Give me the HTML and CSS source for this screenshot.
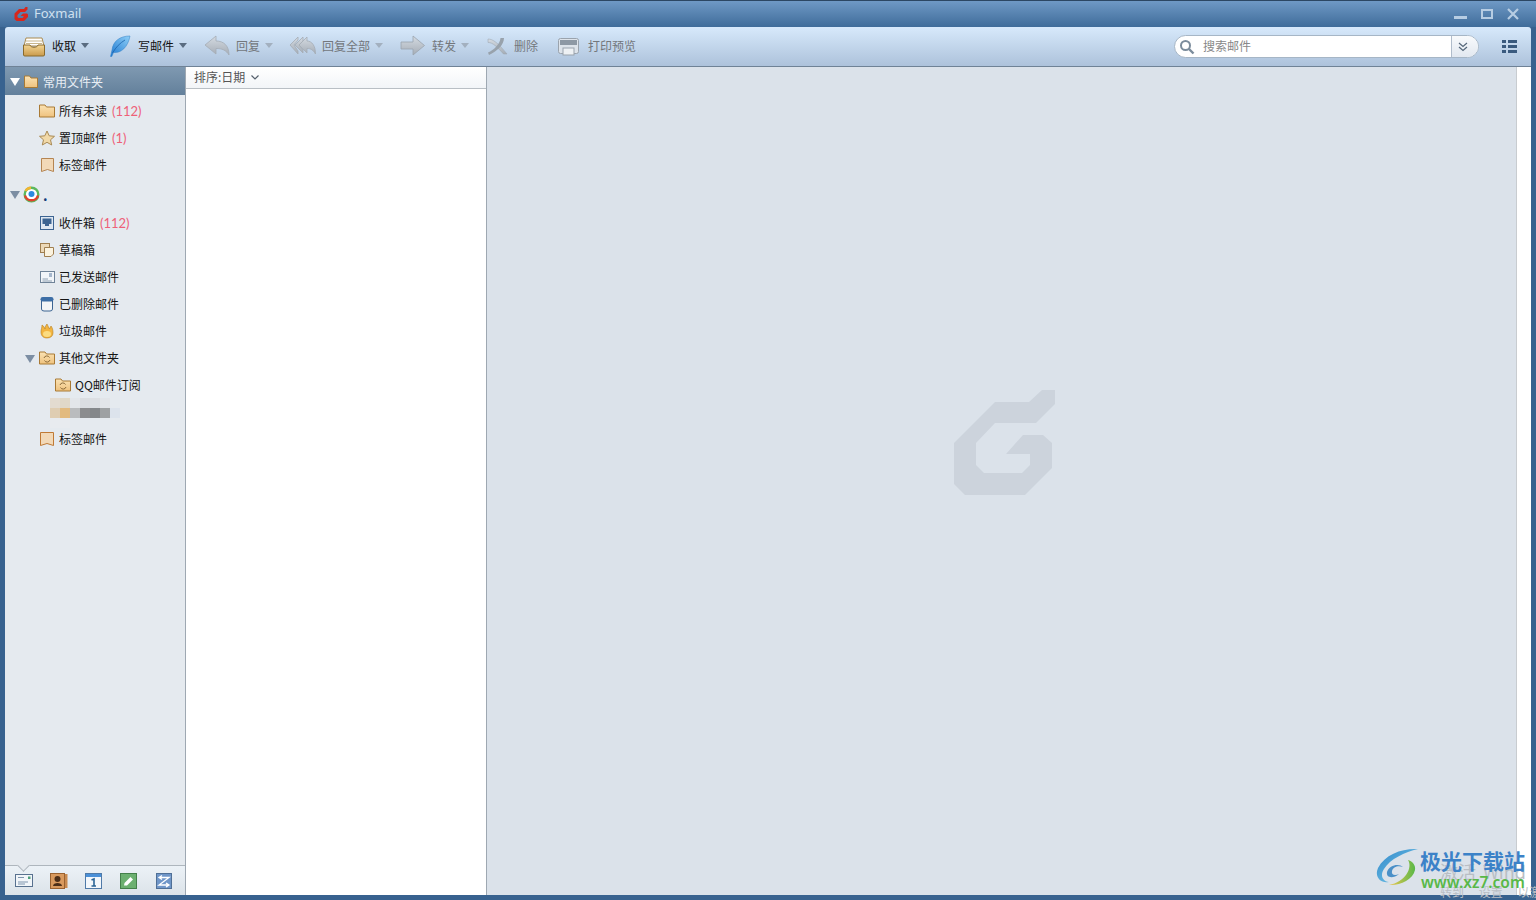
FILE: index.html
```html
<!DOCTYPE html>
<html lang="zh-CN">
<head>
  <meta charset="UTF-8" />
  <title>Foxmail</title>
  <link rel="stylesheet" href="styles.css">
</head>
<body>
  <svg class="defs" aria-hidden="true">
    <defs>
      <linearGradient id="tan" x1="0" y1="0" x2="0" y2="1"><stop offset="0" stop-color="#fbe3b4"/><stop offset="1" stop-color="#efc27e"/></linearGradient>
      <linearGradient id="tray" x1="0" y1="0" x2="0" y2="1"><stop offset="0" stop-color="#f3d593"/><stop offset="1" stop-color="#c99a4c"/></linearGradient>
      <linearGradient id="feather" x1="1" y1="0" x2="0" y2="1"><stop offset="0" stop-color="#8fd0f8"/><stop offset="1" stop-color="#1f78d0"/></linearGradient>
      <linearGradient id="off" x1="0" y1="0" x2="0" y2="1"><stop offset="0" stop-color="#d5dbe2"/><stop offset="1" stop-color="#a5adb6"/></linearGradient>
      <linearGradient id="swirl1" x1="0" y1="0" x2="1" y2="1"><stop offset="0" stop-color="#2f86c8"/><stop offset="1" stop-color="#7fd0ee"/></linearGradient>
      <linearGradient id="swirl2" x1="0" y1="0" x2="1" y2="0"><stop offset="0" stop-color="#f0c850"/><stop offset="1" stop-color="#58b848"/></linearGradient>
    </defs>
  </svg>

  <div class="window">
    <header class="titlebar">
      <svg class="app-logo" width="16" height="16" viewBox="0 0 16 16"><path d="M14.500 1 L14.500 3.500 L12 6 L7.500 6 L4.500 9 L4.500 11 L5.500 12 L9.500 12 L10.500 11 L10.500 10 L7.500 10 L10 7.500 L14 7.500 L15 8.500 L15 11 L11 15 L3.500 15 L1.500 13 L1.500 7.500 L6 3 L11 3 L12.500 1 Z" fill="#d8261c"/></svg>
      <span class="app-name">Foxmail</span>
      <div class="win-controls">
        <svg width="13" height="12" viewBox="0 0 13 12"><rect x="0" y="8" width="13" height="3" fill="#b7cde3"/></svg>
        <svg width="12" height="12" viewBox="0 0 12 12"><rect x="1" y="2" width="10" height="8" fill="none" stroke="#b7cde3" stroke-width="2"/></svg>
        <svg width="12" height="12" viewBox="0 0 12 12"><path d="M1 1 L11 11 M11 1 L1 11" stroke="#b7cde3" stroke-width="2.200"/></svg>
      </div>
    </header>

    <nav class="toolbar">
      <div class="tool">
        <svg class="tool-icon" width="24" height="24" viewBox="0 0 24 24">
          <path d="M4 4 L20 4 L22 12 L2 12 Z" fill="#fff" stroke="#a98a50"/>
          <path d="M4 7 H20 M4 9.500 H20" stroke="#c9b68c"/>
          <path d="M1.500 11 H8 C8.500 14 15.500 14 16 11 H22.500 V21 Q22.500 22 21 22 H3 Q1.500 22 1.500 21 Z" fill="url(#tray)" stroke="#8a6a2c"/>
        </svg>
        <span class="tool-text">收取</span><i class="tool-arrow"></i>
      </div>
      <div class="tool">
        <svg class="tool-icon" width="27" height="24" viewBox="0 0 27 24">
          <path d="M25 2 C15 2 8 7 7 16 L5.500 22.500 L6.800 22.500 L8.500 18.500 C16 19.500 23 13 25 2 Z" fill="url(#feather)" stroke="#2f7fc4" stroke-width=".5"/>
          <path d="M7.500 19 C11 13 15 9 20 6" fill="none" stroke="#1a62aa" stroke-width=".8"/>
        </svg>
        <span class="tool-text">写邮件</span><i class="tool-arrow"></i>
      </div>
      <div class="tool off">
        <svg class="tool-icon" width="27" height="24" viewBox="0 0 27 24">
          <path d="M2 11 L13 2 V7 C21 7 26 12 26 21 C23 16 19 14.500 13 14.500 V20 Z" fill="url(#off)" stroke="#a4acb5" stroke-width=".8"/>
        </svg>
        <span class="tool-text">回复</span><i class="tool-arrow"></i>
      </div>
      <div class="tool off">
        <svg class="tool-icon" width="27" height="24" viewBox="0 0 27 24">
          <path d="M1 11 L9 3 V6 L5 11 L9 17 V20 Z" fill="url(#off)" stroke="#a4acb5" stroke-width=".8"/>
          <path d="M6 11 L14 3 V7 L10 11 L14 16 V19 Z" fill="url(#off)" stroke="#a4acb5" stroke-width=".8"/>
          <path d="M10 11 L18 3 V7 C23 7 26.500 12 26.500 20 C24 16 22 14.500 18 14.500 V19 Z" fill="url(#off)" stroke="#a4acb5" stroke-width=".8"/>
        </svg>
        <span class="tool-text">回复全部</span><i class="tool-arrow"></i>
      </div>
      <div class="tool off">
        <svg class="tool-icon" width="27" height="24" viewBox="0 0 27 24">
          <path d="M2 8 H14 V2 L25.500 11.500 L14 21 V15 H2 Z" fill="url(#off)" stroke="#9aa3ad" stroke-width=".8"/>
        </svg>
        <span class="tool-text">转发</span>
        <i class="tool-arrow"></i>
      </div>
      <div class="tool off">
        <svg class="tool-icon" width="23" height="24" viewBox="0 0 23 24">
          <path d="M3 5 C8 5 13 9 22 20 L18.500 20 C12 13 8 8.500 3 8.500 Z" fill="url(#off)" stroke="#98a2ac" stroke-width=".5"/>
          <path d="M15.500 4 L19 4 C19 11 12 17 4 21 L3 18.500 C9 16 15 10 15.500 4 Z" fill="#98a2ac"/>
        </svg>
        <span class="tool-text">删除</span>
      </div>
      <div class="tool off">
        <svg class="tool-icon" width="28" height="24" viewBox="0 0 28 24">
          <rect x="4.500" y="4.500" width="20" height="15" rx="2" fill="#dde3ea" stroke="#9aa3ad"/>
          <rect x="6" y="6" width="17" height="5" fill="#8d98a4"/>
          <rect x="9" y="14" width="11" height="7" fill="#eef1f4" stroke="#9aa3ad"/>
        </svg>
        <span class="tool-text">打印预览</span>
      </div>

      <div class="search">
        <svg class="search-icon" width="16" height="16" viewBox="0 0 16 16"><circle cx="6.500" cy="6.500" r="4.500" fill="none" stroke="#7b8c9c" stroke-width="2"/><path d="M10 10 L14.500 14.500" stroke="#7b8c9c" stroke-width="2.400"/></svg>
        <span class="search-text">搜索邮件</span>
        <span class="search-more">
          <svg width="10" height="10" viewBox="0 0 10 10"><path d="M1 1 L5 4.500 L9 1 M1 5 L5 8.500 L9 5" fill="none" stroke="#55677a" stroke-width="1.200"/></svg>
        </span>
      </div>
      <svg class="menu-icon" width="15" height="13" viewBox="0 0 15 13"><path d="M0 0 H4 V3 H0 Z M6 0 H15 V3 H6 Z M0 5 H4 V8 H0 Z M6 5 H15 V8 H6 Z M0 10 H4 V13 H0 Z M6 10 H15 V13 H6 Z" fill="#3a5a7e"/></svg>
    </nav>

    <div class="main">
      <aside class="sidebar">
        <div class="side-head">
          <i class="caret white"></i>
          <svg width="14" height="13" viewBox="0 0 14 13"><path d="M.5 12.500 V1 H5.500 L7 3 H13.500 V12.500 Z" fill="url(#tan)" stroke="#a97a35"/></svg>
          <span>常用文件夹</span>
        </div>
        <ul class="tree">
          <li class="row">
            <svg class="row-icon" width="16" height="16" viewBox="0 0 16 16"><path d="M.5 14 V2 H6 L7.500 4 H15.500 V14 Z" fill="url(#tan)" stroke="#a97a35"/></svg>
            <span>所有未读</span><em class="count">(112)</em>
          </li>
          <li class="row">
            <svg class="row-icon" width="16" height="16" viewBox="0 0 16 16"><path d="M8 1 L10.200 5.800 L15.500 6.300 L11.500 9.800 L12.700 15 L8 12.300 L3.300 15 L4.500 9.800 L.5 6.300 L5.800 5.800 Z" fill="#f1d9a8" stroke="#a98a55"/></svg>
            <span>置顶邮件</span><em class="count">(1)</em>
          </li>
          <li class="row">
            <svg class="row-icon" width="16" height="16" viewBox="0 0 16 16"><path d="M2.500 1.500 H14.500 V14.500 L8.500 12.500 L2.500 14.500 Z" fill="#f2d9b8" stroke="#b58552"/></svg>
            <span>标签邮件</span>
          </li>
          <li class="row account">
            <i class="caret"></i>
            <svg class="account-icon" width="17" height="17" viewBox="0 0 17 17">
              <circle cx="8.500" cy="8.500" r="6.800" fill="#fff" stroke="#5cb85c" stroke-width="2.400"/>
              <path d="M2 9.500 A6.800 6.800 0 0 0 15 9.500" fill="none" stroke="#e2402c" stroke-width="2.400"/>
              <path d="M2.500 5 A6.800 6.800 0 0 1 8 1.700" fill="none" stroke="#f2b632" stroke-width="2.400"/>
              <circle cx="8.500" cy="8" r="3" fill="#2b8be0"/>
            </svg>
            <b class="account-dot">.</b>
          </li>
          <li class="row">
            <svg class="row-icon" width="16" height="16" viewBox="0 0 16 16"><rect x="1.500" y="1.500" width="13" height="13" fill="#dfe8f2" stroke="#3c6492"/><path d="M3.500 3.500 H12.500 V9 H10 V11 H6 V9 H3.500 Z" fill="#3c6492"/></svg>
            <span>收件箱</span><em class="count">(112)</em>
          </li>
          <li class="row">
            <svg class="row-icon" width="16" height="16" viewBox="0 0 16 16"><rect x="1.500" y="1.500" width="9" height="9" fill="#ecd9b8" stroke="#a07f50"/><path d="M5.500 5.500 H14.500 V12 L12 14.500 H5.500 Z" fill="#fbf3df" stroke="#a07f50"/></svg>
            <span>草稿箱</span>
          </li>
          <li class="row">
            <svg class="row-icon" width="16" height="16" viewBox="0 0 16 16"><rect x="1.500" y="2.500" width="14" height="11" fill="#f1f5f9" stroke="#6f8398"/><path d="M3.500 10 H9 M3.500 12 H13" stroke="#8ea0b2"/><path d="M10 5 H13 M10 7 H13" stroke="#5a7aa0"/></svg>
            <span>已发送邮件</span>
          </li>
          <li class="row">
            <svg class="row-icon" width="16" height="16" viewBox="0 0 16 16"><path d="M2.500 4 V13 Q2.500 15 5 15 H11 Q13.500 15 13.500 13 V4 Z" fill="#f3f5f7" stroke="#3c6492"/><rect x="1.500" y="1" width="13" height="4.500" rx="2.200" fill="#3c6ea6"/></svg>
            <span>已删除邮件</span>
          </li>
          <li class="row">
            <svg class="row-icon" width="16" height="16" viewBox="0 0 16 16"><path d="M2 9 C2 6 3 5 3 2 C5 3 5.500 5 6 6 C6 4 7 2 8 1 C8.500 3 10 4 10.500 6 C11 5 11.500 4 12 3 C13.500 5 14 7 14 10 C14 13 11.500 15 8 15 C4.500 15 2 13 2 9 Z" fill="#f2b440" stroke="#b57f20" stroke-width=".6"/><ellipse cx="8" cy="11" rx="4" ry="3" fill="#fbdc80"/></svg>
            <span>垃圾邮件</span>
          </li>
          <li class="row has-caret">
            <i class="caret"></i>
            <svg class="row-icon" width="16" height="16" viewBox="0 0 16 16"><path d="M.5 14 V2 H6 L7.500 4 H15.500 V14 Z" fill="url(#tan)" stroke="#a97a35"/><path d="M5 8 A3 3 0 0 1 10.500 7.500 M11 10 A3 3 0 0 1 5.500 10.500" fill="none" stroke="#8a6a3a"/></svg>
            <span>其他文件夹</span>
          </li>
          <li class="row sub">
            <svg class="row-icon" width="16" height="16" viewBox="0 0 16 16"><path d="M.5 14 V2 H6 L7.500 4 H15.500 V14 Z" fill="url(#tan)" stroke="#a97a35"/><path d="M5 8 A3 3 0 0 1 10.500 7.500 M11 10 A3 3 0 0 1 5.500 10.500" fill="none" stroke="#8a6a3a"/></svg>
            <span>QQ邮件订阅</span>
          </li>
          <li class="row blur-row">
            <svg width="70" height="30" viewBox="0 0 70 30" shape-rendering="crispEdges">
              <rect x="0" y="0" width="10" height="10" fill="#e3dbd0"/><rect x="10" y="0" width="10" height="10" fill="#e0d8c8"/>
              <rect x="20" y="0" width="10" height="10" fill="#e3e6ea"/><rect x="30" y="0" width="10" height="10" fill="#dadde1"/>
              <rect x="40" y="0" width="10" height="10" fill="#dcdfe3"/><rect x="50" y="0" width="10" height="10" fill="#e2e5e9"/>
              <rect x="0" y="10" width="10" height="10" fill="#dfcdb2"/><rect x="10" y="10" width="10" height="10" fill="#e2ba7e"/>
              <rect x="20" y="10" width="10" height="10" fill="#babcbe"/><rect x="30" y="10" width="10" height="10" fill="#8b8c8e"/>
              <rect x="40" y="10" width="10" height="10" fill="#84878a"/><rect x="50" y="10" width="10" height="10" fill="#9ea1a3"/>
              <rect x="60" y="10" width="10" height="10" fill="#dce3ec"/>
              <rect x="0" y="20" width="20" height="10" fill="#e8ebef"/>
            </svg>
          </li>
          <li class="row">
            <svg class="row-icon" width="16" height="16" viewBox="0 0 16 16"><path d="M1.500 1.500 H14.500 V14.500 L8 12.500 L1.500 14.500 Z" fill="#f2d9b8" stroke="#c07a35"/></svg>
            <span>标签邮件</span>
          </li>
        </ul>
        <div class="side-tabs">
          <i class="tab-notch"></i>
          <span class="tab">
            <svg width="18" height="15" viewBox="0 0 18 15"><rect x=".5" y="1.500" width="17" height="12" fill="#f1f5f9" stroke="#58718f"/><path d="M3 4.500 H9 M3 9 H13 M3 11 H10" stroke="#7f95ad"/><rect x="13" y="3.500" width="2.500" height="2.500" fill="#4da07a"/></svg>
          </span>
          <span class="tab">
            <svg width="18" height="16" viewBox="0 0 18 16"><rect x=".5" y=".5" width="14" height="15" fill="#d99a5e" stroke="#9a6230"/><rect x="15" y="1" width="2.500" height="14" fill="#c88a50"/><circle cx="7.500" cy="6" r="3" fill="#4d2f18"/><path d="M3 13 C3 9 12 9 12 13 Z" fill="#4d2f18"/></svg>
          </span>
          <span class="tab">
            <svg width="17" height="16" viewBox="0 0 17 16"><rect x=".5" y=".5" width="16" height="15" fill="#f3f7fb" stroke="#4f7aa8"/><rect x="1" y="1" width="15" height="3" fill="#4a90d8"/><path d="M6.500 7 L9 6 V13 M6.500 13 H11" fill="none" stroke="#2a6496" stroke-width="1.600"/></svg>
          </span>
          <span class="tab">
            <svg width="17" height="16" viewBox="0 0 17 16"><rect x=".5" y=".5" width="16" height="15" fill="#6cb070" stroke="#44804a"/><path d="M4 12.500 L4.500 10 L10.500 4 L13 6.500 L7 12.500 Z" fill="#fff"/></svg>
          </span>
          <span class="tab">
            <svg width="16" height="16" viewBox="0 0 16 16"><rect x=".5" y=".5" width="15" height="15" fill="#6f96c8" stroke="#4f6f96"/><path d="M3 4.500 H13 L3 12 H13 M6 2.500 L3 4.500 L6 6.500 M10 10 L13 12 L10 14" fill="none" stroke="#fff" stroke-width="1.300"/></svg>
          </span>
        </div>
      </aside>

      <section class="mail-list">
        <div class="sort-bar">
          <span>排序:日期</span>
          <svg width="8" height="5" viewBox="0 0 8 5"><path d="M.5 .5 L4 4 L7.500 .5" fill="none" stroke="#55606c" stroke-width="1.200"/></svg>
        </div>
      </section>

      <section class="preview">
        <svg width="102" height="106" viewBox="954 390 102 106"><polygon points="1055,390 1055,404 1036,423 995,423 976,443 976,465 984,473 1022,473 1030,465 1030,454 1006,454 1023,435 1043,435 1052,443 1052,468 1025,495 965,495 954,484 954,443 995,402 1029,402 1042,390" fill="#ccd3dc"/></svg>
      </section>

      <div class="right-strip"></div>
    </div>
  </div>

  <div class="watermark">
    <span class="ghost ghost-a">激活 Wind</span>
    <span class="ghost ghost-b">转到 设置 以激</span>
    <svg class="wm-logo" width="44" height="40" viewBox="0 0 44 40">
      <path d="M43 1 C28 0 10 6 3 20 C-1 29 6 36 14 34 C7 33 5 27 9 21 C15 11 30 4 43 1 Z" fill="url(#swirl1)"/>
      <path d="M12 24 C14 17 24 15 28 19 C23 17 18 19 17 23 C16 27 20 28 24 26 C18 31 11 30 12 24 Z" fill="#4a90c8"/>
      <path d="M33 12 C38 20 30 34 14 37 C24 38 38 32 40 22 C41 17 37 13 33 12 Z" fill="url(#swirl2)"/>
    </svg>
    <span class="wm-name">极光下载站</span>
    <span class="wm-url">www.xz7.com</span>
  </div>
</body>
</html>
```

FILE: styles.css
```css
* {
  box-sizing: border-box;
}
html, body {
  margin: 0;
  padding: 0;
  height: 100%;
  overflow: hidden;
}
body {
  font-family: "Noto Sans CJK SC", "Noto Sans", sans-serif;
  font-size: 12px;
  color: #141414;
  background: #3a6494;
}
.defs {
  display: block;
  width: 0;
  height: 0;
}

.window {
  display: flex;
  flex-direction: column;
  height: 100vh;
  padding: 0 5px 5px 5px;
  background: #38628f;
}

/* Title bar */
.titlebar {
  display: flex;
  align-items: center;
  height: 27px;
  flex-shrink: 0;
  margin: 0 -5px;
  padding: 0 17px 0 13px;
  border-top: 1px solid #2c4763;
  background: linear-gradient(to bottom, #6f99c5, #3f6c9a);
}
.app-name {
  margin-left: 5px;
  padding-bottom: 2px;
  font-family: "Noto Sans", sans-serif;
  font-size: 13px;
  color: #cfe0f0;
}
.win-controls {
  display: flex;
  align-items: center;
  gap: 14px;
  margin-left: auto;
}

/* Toolbar */
.toolbar {
  display: flex;
  align-items: center;
  gap: 16px;
  height: 40px;
  flex-shrink: 0;
  padding: 0 14px 0 17px;
  border-bottom: 1px solid #6f8296;
  border-radius: 3px 3px 0 0;
  background: linear-gradient(to bottom, #d7e9fb, #adc2db);
}
.tool {
  display: flex;
  align-items: center;
  margin-top: -2px;
}
.tool-icon {
  margin-right: 6px;
}
.tool-text {
  line-height: 16px;
}
.tool-arrow {
  width: 0;
  height: 0;
  margin-left: 5px;
  border-left: 4px solid transparent;
  border-right: 4px solid transparent;
  border-top: 5px solid #5a6c80;
}
.tool.off .tool-text {
  color: #73777c;
}
.tool.off .tool-arrow {
  border-top-color: #a3b0bf;
}

.search {
  display: flex;
  align-items: center;
  width: 305px;
  height: 23px;
  margin-left: auto;
  padding-left: 4px;
  overflow: hidden;
  border: 1px solid #a6b6c6;
  border-radius: 12px;
  background: #fff;
}
.search-text {
  flex: 1;
  margin-left: 8px;
  padding-bottom: 2px;
  color: #888;
}
.search-more {
  display: flex;
  align-items: center;
  justify-content: center;
  width: 27px;
  height: 100%;
  padding-right: 4px;
  border-left: 1px solid #b0bccb;
  background: linear-gradient(to bottom, #f8fafc, #e2e8f0);
}
.menu-icon {
  margin-left: 7px;
}

/* Three panes */
.main {
  display: flex;
  flex: 1;
  min-height: 0;
}
.sidebar {
  display: flex;
  flex-direction: column;
  width: 181px;
  flex-shrink: 0;
  border-right: 1px solid #9ea8b2;
  background: #e5eaef;
}
.side-head {
  display: flex;
  align-items: center;
  gap: 4px;
  height: 28px;
  flex-shrink: 0;
  padding-left: 5px;
  color: #e8eef4;
  background: linear-gradient(to bottom, #7f99b1, #63809b);
}
.side-head span {
  margin-left: 1px;
}
.caret {
  width: 0;
  height: 0;
  flex-shrink: 0;
  margin: 2px 4px 0 0;
  border-left: 5px solid transparent;
  border-right: 5px solid transparent;
  border-top: 8px solid #7c8ea3;
}
.caret.white {
  margin-right: 0;
  border-top-color: #fff;
}

.tree {
  flex: 1;
  margin: 0;
  padding: 2px 0 0 0;
  list-style: none;
}
.row {
  display: flex;
  align-items: center;
  height: 27px;
  padding-left: 34px;
}
.row-icon {
  margin-right: 4px;
  flex-shrink: 0;
}
.row.has-caret {
  padding-left: 20px;
}
.row.sub {
  padding-left: 50px;
}
.row.account {
  margin: 2px 0;
  padding-left: 5px;
}
.account-icon {
  margin: 2px 0 0 -1px;
}
.account-dot {
  margin: 2px 0 0 3px;
  font-size: 14px;
  color: #123e7a;
}
.blur-row {
  padding-left: 45px;
}
.blur-row svg {
  margin-top: 3px;
}
.count {
  margin-left: 5px;
  font-family: "Lato", sans-serif;
  font-style: normal;
  font-size: 13px;
  color: #ee6078;
}

/* Bottom tabs under the folder tree */
.side-tabs {
  position: relative;
  display: flex;
  align-items: center;
  height: 30px;
  flex-shrink: 0;
  padding-left: 1px;
  border-top: 1px solid #aeb6bd;
  background: linear-gradient(to bottom, #ecf2f7, #dce3e9);
}
.tab {
  display: flex;
  justify-content: center;
  width: 35px;
}
.tab-notch {
  position: absolute;
  top: -5px;
  left: 14px;
  width: 9px;
  height: 9px;
  border-right: 1px solid #aeb6bd;
  border-bottom: 1px solid #aeb6bd;
  background: #e5eaef;
  transform: rotate(45deg);
}

.mail-list {
  width: 301px;
  flex-shrink: 0;
  border-right: 1px solid #9ea8b2;
  background: #fff;
}
.sort-bar {
  display: flex;
  align-items: center;
  gap: 6px;
  height: 22px;
  padding-left: 8px;
  color: #555;
  border-bottom: 1px solid #b9bfc5;
  background: linear-gradient(to bottom, #fff, #f2f5f8);
}
.sort-bar span {
  padding-bottom: 2px;
}

.preview {
  display: flex;
  flex: 1;
  align-items: center;
  justify-content: center;
  padding: 0 0 76px 6px;
  background: #dbe2ea;
}
.right-strip {
  width: 15px;
  flex-shrink: 0;
  border-left: 1px solid #c8ccd0;
  background: #fff;
}

/* Download site watermark stamped over the corner */
.watermark {
  position: absolute;
  right: 0;
  bottom: 0;
  width: 162px;
  height: 52px;
  overflow: hidden;
}
.wm-logo {
  position: absolute;
  left: 1px;
  top: 0;
}
.wm-name {
  position: absolute;
  left: 46px;
  top: -3px;
  font-size: 21px;
  line-height: 30px;
  font-weight: 700;
  white-space: nowrap;
  color: #3c82c8;
}
.wm-url {
  position: absolute;
  left: 47px;
  top: 24px;
  font-family: "Noto Sans", sans-serif;
  font-size: 15.500px;
  line-height: 20px;
  font-weight: 600;
  white-space: nowrap;
  color: #58b848;
}
.ghost {
  position: absolute;
  white-space: nowrap;
  color: #b9bec4;
}
.ghost-a {
  left: 66px;
  top: 11px;
  font-size: 18px;
  line-height: 24px;
  word-spacing: 3px;
}
.ghost-b {
  left: 66px;
  top: 34px;
  font-size: 12px;
  line-height: 20px;
  word-spacing: 12px;
}
```
